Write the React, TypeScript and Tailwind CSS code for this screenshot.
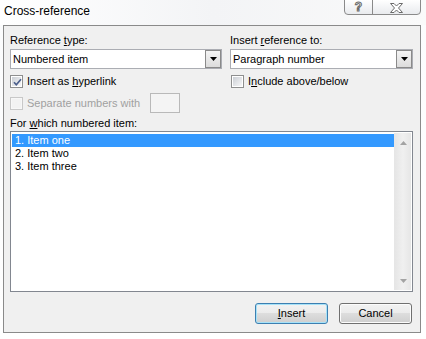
const Checkbox = ({ checked = false, disabled = false }: { checked?: boolean; disabled?: boolean }) => (
  <span
    className={`relative flex h-[13px] w-[13px] shrink-0 items-center justify-center border ${
      disabled ? "border-[#c8c8c8] bg-[#f7f7f7]" : "border-[#8e8f8f] bg-white"
    }`}
  >
    <span
      className={`h-[9px] w-[9px] ${
        disabled ? "bg-[#f2f2f2]" : "bg-gradient-to-br from-[#cbcfd5] to-[#f7f7f8]"
      }`}
    />
    {checked && (
      <svg className="absolute left-[1px] top-[1px]" width="11" height="11" viewBox="0 0 11 11">
        <path d="M2 5.2 L4.3 7.8 L9 2.2" fill="none" stroke="#4c5f8c" strokeWidth="1.7" />
      </svg>
    )}
  </span>
);

const Select = ({ value }: { value: string }) => (
  <div className="flex h-[20px] items-center border border-[#abadb3] bg-white">
    <span className="flex-1 pl-[2px] leading-[13px]">{value}</span>
    <span className="flex h-full w-[16px] items-center justify-center border border-[#8a8a8a] bg-gradient-to-b from-[#f4f4f4] to-[#dcdcdc]">
      <svg width="7" height="4" viewBox="0 0 7 4">
        <path d="M0 0 H7 L3.5 4 Z" fill="#000" />
      </svg>
    </span>
  </div>
);

const items = ["1. Item one", "2. Item two", "3. Item three"];

export default function App() {
  return (
    <div className="h-[339px] w-[426px] overflow-hidden bg-gradient-to-b from-[#fbfcfd] to-white font-['Liberation_Sans',Arial,sans-serif] text-[11px] leading-[15px] text-black">
      {/* title bar */}
      <div className="flex h-[25px] justify-between bg-gradient-to-r from-white via-[#f3f4f6] to-[#fafafa]">
        <span className="pl-[4px] pt-[4px] text-[12px]">Cross-reference</span>
        <div className="mr-[5px] flex h-[16px] -translate-y-[1px] overflow-hidden rounded-b-[4px] border border-[#8a8a8a] bg-gradient-to-b from-white to-[#e9ebee]">
          <span className="flex w-[28px] items-center justify-center border-r border-[#8a8a8a] pt-[1px] text-[12px] font-bold text-white [-webkit-text-stroke:1px_#6a6a6a]">
            ?
          </span>
          <span className="flex w-[47px] items-center justify-center pt-[1px]">
            <svg width="13" height="10" viewBox="0 0 13 10">
              <path
                d="M0.5 0.5 H4 L6.5 3 L9 0.5 H12.5 L8.5 5 L12.5 9.5 H9 L6.5 7 L4 9.5 H0.5 L4.5 5 Z"
                fill="#fff"
                stroke="#6a6a6a"
                strokeWidth="1"
              />
            </svg>
          </span>
        </div>
      </div>

      {/* dialog body */}
      <div className="ml-[3px] flex h-[308px] w-[418px] flex-col border border-[#8a8a8a] bg-[#f0f0f0] pl-[6px] pr-[7px]">
        <div className="mt-[7px] grid grid-cols-[212px_183px] gap-x-[8px]">
          <div className="flex flex-col">
            <span>
              Reference <span className="underline">t</span>ype:
            </span>
            <div className="mt-[1px]">
              <Select value="Numbered item" />
            </div>
            <label className="mt-[6px] flex h-[13px] items-center gap-[4px] leading-[13px]">
              <Checkbox checked />
              <span>
                Insert as <span className="underline">h</span>yperlink
              </span>
            </label>
            <div className="mt-[5px] flex h-[20px] items-center leading-[13px]">
              <Checkbox disabled />
              <span className="ml-[4px] w-[123px] text-[#a0a0a0]">Separate numbers with</span>
              <span className="h-[20px] w-[30px] border border-[#b9b9b9] bg-[#f4f4f4]" />
            </div>
          </div>

          <div className="flex flex-col">
            <span>
              Insert <span className="underline">r</span>eference to:
            </span>
            <div className="mt-[1px]">
              <Select value="Paragraph number" />
            </div>
            <label className="ml-[1px] mt-[6px] flex h-[13px] items-center gap-[4px] leading-[13px]">
              <Checkbox />
              <span>
                I<span className="underline">n</span>clude above/below
              </span>
            </label>
          </div>
        </div>

        <span className="mt-[3px]">
          For <span className="underline">w</span>hich numbered item:
        </span>

        {/* list box */}
        <div className="flex h-[161px] border border-[#828790] bg-white">
          <ul className="flex-1 pl-[1px] pt-[2px] leading-[13px]">
            {items.map((item, i) => (
              <li key={item} className={`h-[13px] pl-[3px] ${i === 0 ? "bg-[#3399ff] text-white" : ""}`}>
                {item}
              </li>
            ))}
          </ul>
          <div className="my-[1px] mr-[1px] flex w-[17px] flex-col items-center justify-between border-l border-[#e6e6e6] bg-gradient-to-r from-[#e6e6e6] via-[#f0f0f0] to-[#e6e6e6] pb-[7px] pt-[8px]">
            <svg width="7" height="4" viewBox="0 0 7 4">
              <path d="M0 4 H7 L3.5 0 Z" fill="#a3a3a3" />
            </svg>
            <svg width="7" height="4" viewBox="0 0 7 4">
              <path d="M0 0 H7 L3.5 4 Z" fill="#a3a3a3" />
            </svg>
          </div>
        </div>

        {/* buttons */}
        <div className="mt-[11px] flex justify-end gap-[11px] pr-[1px]">
          <button className="flex h-[21px] w-[73px] items-center justify-center rounded-[3px] border border-[#3c7fb1] bg-[linear-gradient(#f2f2f2_0%,#ebebeb_50%,#dddddd_50%,#cfcfcf_100%)] leading-[13px] shadow-[inset_0_0_0_1px_#a7e2f8]">
            <span>
              <span className="underline">I</span>nsert
            </span>
          </button>
          <button className="flex h-[21px] w-[73px] items-center justify-center rounded-[3px] border border-[#707070] bg-[linear-gradient(#f2f2f2_0%,#ebebeb_50%,#dddddd_50%,#cfcfcf_100%)] leading-[13px] shadow-[inset_0_0_0_1px_#fcfcfc]">
            Cancel
          </button>
        </div>
      </div>
    </div>
  );
}
